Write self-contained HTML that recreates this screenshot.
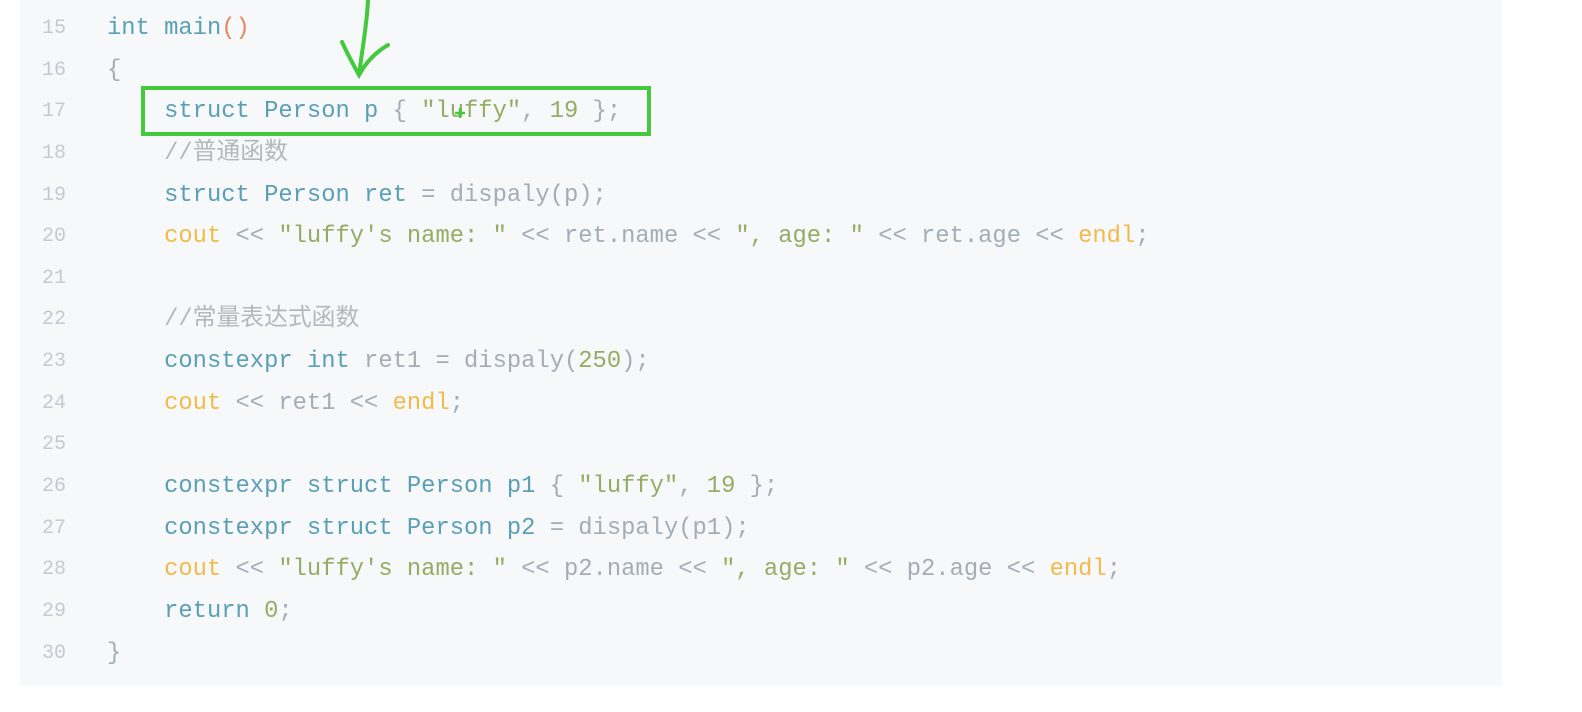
<!DOCTYPE html>
<html><head><meta charset="utf-8"><style>
html,body{margin:0;padding:0;background:#fff;width:1582px;height:712px;overflow:hidden;position:relative}
.bg{position:absolute;left:20px;top:0;width:1482px;height:686px;background:#f6f8fa}
.l{position:absolute;left:0;height:42px;line-height:42px;font-family:"Liberation Mono","Noto Sans CJK SC",monospace;font-size:23.8px;white-space:pre;color:#a3adb8;margin-top:2px}
.n{position:absolute;left:42px;color:#c5cad1;font-size:20px}
.c{position:absolute;left:107px}
.k{color:#5a9fb5}.o{color:#e6855f}.s{color:#96ab63}.y{color:#f1bb4b}.m{color:#b4b8bd}
</style></head><body>
<div class="bg"></div>
<div class="l" style="top:6px"><span class="n">15</span><span class="c"><span class="k">int main</span><span class="o">()</span></span></div>
<div class="l" style="top:48px"><span class="n">16</span><span class="c">{</span></div>
<div class="l" style="top:89px"><span class="n">17</span><span class="c">    <span class="k">struct Person p</span> { <span class="s">"luffy"</span>, <span class="s">19</span> };</span></div>
<div class="l" style="top:131px"><span class="n">18</span><span class="c">    <span class="m">//普通函数</span></span></div>
<div class="l" style="top:173px"><span class="n">19</span><span class="c">    <span class="k">struct Person ret</span> = dispaly(p);</span></div>
<div class="l" style="top:214px"><span class="n">20</span><span class="c">    <span class="y">cout</span> &lt;&lt; <span class="s">"luffy's name: "</span> &lt;&lt; ret.name &lt;&lt; <span class="s">", age: "</span> &lt;&lt; ret.age &lt;&lt; <span class="y">endl</span>;</span></div>
<div class="l" style="top:256px"><span class="n">21</span></div>
<div class="l" style="top:297px"><span class="n">22</span><span class="c">    <span class="m">//常量表达式函数</span></span></div>
<div class="l" style="top:339px"><span class="n">23</span><span class="c">    <span class="k">constexpr int</span> ret1 = dispaly(<span class="s">250</span>);</span></div>
<div class="l" style="top:381px"><span class="n">24</span><span class="c">    <span class="y">cout</span> &lt;&lt; ret1 &lt;&lt; <span class="y">endl</span>;</span></div>
<div class="l" style="top:422px"><span class="n">25</span></div>
<div class="l" style="top:464px"><span class="n">26</span><span class="c">    <span class="k">constexpr struct Person p1</span> { <span class="s">"luffy"</span>, <span class="s">19</span> };</span></div>
<div class="l" style="top:506px"><span class="n">27</span><span class="c">    <span class="k">constexpr struct Person p2</span> = dispaly(p1);</span></div>
<div class="l" style="top:547px"><span class="n">28</span><span class="c">    <span class="y">cout</span> &lt;&lt; <span class="s">"luffy's name: "</span> &lt;&lt; p2.name &lt;&lt; <span class="s">", age: "</span> &lt;&lt; p2.age &lt;&lt; <span class="y">endl</span>;</span></div>
<div class="l" style="top:589px"><span class="n">29</span><span class="c">    <span class="k">return</span> <span class="s">0</span>;</span></div>
<div class="l" style="top:631px"><span class="n">30</span><span class="c">}</span></div>
<svg style="position:absolute;left:0;top:0" width="1582" height="712">
<rect x="143" y="88" width="506" height="46" fill="none" stroke="#44c83c" stroke-width="4"/>
<path d="M368 0 C367 25 362 50 359 75" fill="none" stroke="#44c83c" stroke-width="4" stroke-linecap="round"/>
<path d="M342 42 C348 55 354 66 359 75 C366 62 376 52 388 45" fill="none" stroke="#44c83c" stroke-width="4" stroke-linecap="round"/>
<path d="M455 113 h10 M460 108 v10" stroke="#44c83c" stroke-width="2.5"/>
</svg>
</body></html>
